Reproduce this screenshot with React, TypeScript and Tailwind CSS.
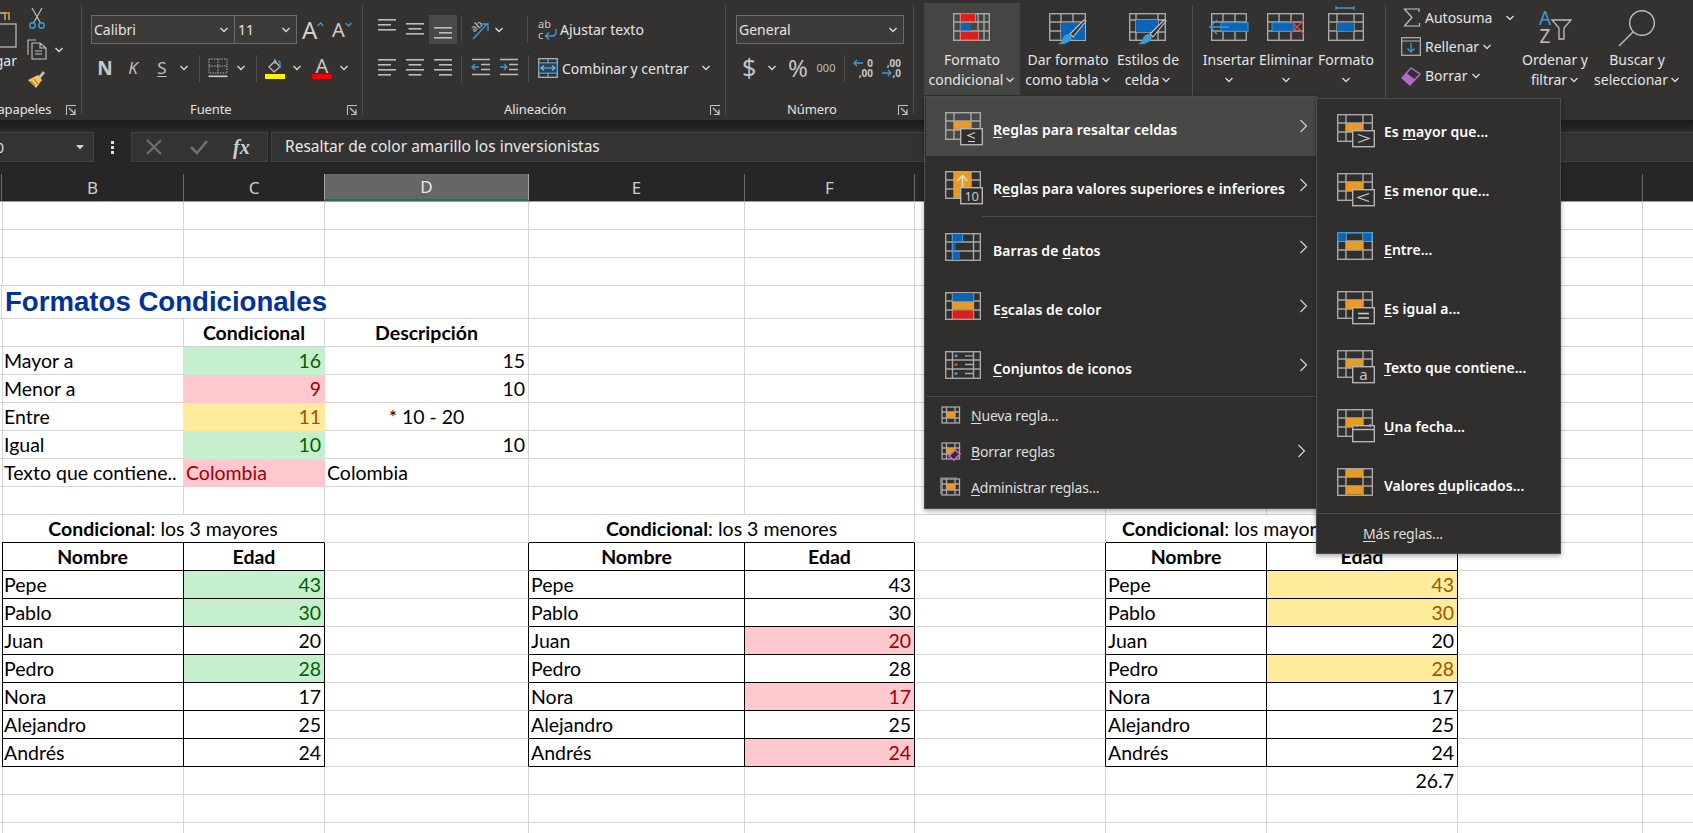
import React from "react";

const COLS = "grid grid-cols-[2px_182px_141px_204px_216px_170px_191px_161px_191px_185px_60px]";
const SEG = "font-['Noto_Sans',sans-serif]";
const CAL = "font-['Lato',sans-serif]";

const GR = "#a9a9a9";
const OR = "#e69b26";
const BL = "#0a64b8";
const LB = "#3d9ad6";
const RD = "#d9201a";
const MBG = "#302f2e";

function Chev({ className = "" }: { className?: string }) {
  return (
    <svg className={`shrink-0 ${className}`} width="10" height="6" viewBox="0 0 10 6">
      <path d="M1.5 1 L5 4.5 L8.5 1" fill="none" stroke="#d8d8d8" strokeWidth="1.4" />
    </svg>
  );
}

function Launcher() {
  return (
    <svg width="11" height="11" viewBox="0 0 11 11" className="shrink-0">
      <path d="M0.5 10 V0.5 H10" fill="none" stroke="#c4c4c4" />
      <path d="M3 3 L9 9 M9 4.5 V9.5 H4" fill="none" stroke="#c4c4c4" strokeWidth="1.2" />
    </svg>
  );
}

function Grid({ w = 35, h = 27, xs = [9, 26], ys = [9, 18], c = GR }: { w?: number; h?: number; xs?: number[]; ys?: number[]; c?: string }) {
  return (
    <g fill="none" stroke={c} strokeWidth="1.4">
      <rect x="0.7" y="0.7" width={w - 0.4} height={h - 0.4} />
      {xs.map((x) => <path key={x} d={`M${x} 0.7 V${h}`} />)}
      {ys.map((y) => <path key={y} d={`M0.7 ${y} H${w}`} />)}
    </g>
  );
}

function SubBox({ children }: { children?: React.ReactNode }) {
  return (
    <g>
      <rect x="15.7" y="16.7" width="21.6" height="16" fill={MBG} stroke="#b5b5b5" strokeWidth="1.4" />
      {children}
    </g>
  );
}

function Brush() {
  return (
    <>
      <path d="M37 8 L24 24 L21 21 L35 7 Z" fill="#333231" stroke="#c9c9c9" strokeWidth="1.1" />
      <path d="M20 21 Q24 24 22 27 Q18 32 9 31 Q13 29 14 25 Q16 21 20 21 Z" fill={LB} />
    </>
  );
}

function MenuIcon({ kind }: { kind: string }) {
  const cell = <rect x="9" y="9" width="17" height="9" fill={OR} />;
  let body: React.ReactNode = null;
  const L = "none";
  if (kind === "le") body = <>{cell}<SubBox><path d="M30 20.5 L23 23.5 L30 26.5 M23 29.5 H30" fill={L} stroke="#cfcfcf" strokeWidth="1.2" /></SubBox></>;
  if (kind === "gt") body = <>{cell}<SubBox><path d="M21 20.5 L32 24.5 L21 28.5" fill={L} stroke="#cfcfcf" strokeWidth="1.2" /></SubBox></>;
  if (kind === "lt") body = <>{cell}<SubBox><path d="M32 20.5 L21 24.5 L32 28.5" fill={L} stroke="#cfcfcf" strokeWidth="1.2" /></SubBox></>;
  if (kind === "eq") body = <>{cell}<SubBox><path d="M21 22.5 H32 M21 27 H32" fill={L} stroke="#cfcfcf" strokeWidth="1.3" /></SubBox></>;
  if (kind === "a") body = <>{cell}<SubBox><text x="26.5" y="30" fontSize="15" fill="#c4c4c4" textAnchor="middle" fontFamily="Noto Sans">a</text></SubBox></>;
  if (kind === "top") body = (
    <>
      <rect x="9" y="1" width="17" height="26" fill={OR} />
      <path d="M17.5 24 V5 M12.5 10 L17.5 4.5 L22.5 10" fill="none" stroke="#ddd" strokeWidth="1.5" />
      <SubBox><text x="26.5" y="30" fontSize="13" fill="#c4c4c4" textAnchor="middle" fontFamily="Noto Sans" letterSpacing="-0.5">10</text></SubBox>
    </>
  );
  if (kind === "date") body = (
    <>
      {cell}
      <rect x="15.7" y="16.7" width="21.6" height="16" fill={MBG} stroke="#b5b5b5" strokeWidth="1.4" />
      <path d="M15.7 20.5 H37 M20 15 V18 M33 15 V18" stroke="#b5b5b5" strokeWidth="1.4" />
    </>
  );
  if (kind === "between") body = (
    <>
      <rect x="1" y="1" width="8" height="8" fill={BL} />
      <rect x="26" y="1" width="8.5" height="8" fill={BL} />
      <rect x="9" y="9" width="17" height="9" fill={OR} />
      <path d="M0.7 9 V0.7 H35 V9" fill="none" stroke={LB} strokeWidth="1.2" />
    </>
  );
  if (kind === "dup") body = (
    <>
      <rect x="9" y="1" width="17" height="8" fill={OR} />
      <rect x="9" y="18" width="17" height="8.5" fill={OR} />
    </>
  );
  if (kind === "bars") body = (
    <>
      <rect x="7.5" y="1" width="10" height="7.5" fill={BL} />
      <rect x="7.5" y="10" width="3.5" height="7.5" fill={BL} />
      <rect x="7.5" y="19" width="7.5" height="7.5" fill={BL} />
      <path d="M7.5 1 V27 M7.5 8.7 H17.5 V1" fill="none" stroke={LB} strokeWidth="1" />
    </>
  );
  if (kind === "scale") body = (
    <>
      <rect x="7.5" y="1" width="21" height="8" fill={BL} />
      <rect x="7.5" y="10" width="21" height="7.5" fill={OR} />
      <rect x="7.5" y="18.5" width="21" height="8" fill={RD} />
      <path d="M7.5 18.5 V27 H28.5 V18.5" fill="none" stroke="#f26a6a" strokeWidth="1" />
    </>
  );
  if (kind === "icons") body = (
    <>
      <circle cx="11" cy="4.8" r="1.6" fill={LB} />
      <circle cx="11" cy="13.5" r="1.6" fill="#e0403c" />
      <circle cx="11" cy="22.5" r="1.6" fill={LB} />
      <path d="M20 4.8 H28 M20 13.5 H28 M20 22.5 H28" stroke="#a9a9a9" strokeWidth="1.3" />
    </>
  );
  const xs = kind === "bars" || kind === "scale" || kind === "icons" ? [7.5, 28.5] : [9, 26];
  return (
    <svg width="39" height="35" viewBox="0 0 39 35" className="mt-[15px] shrink-0">
      <Grid xs={xs} />
      {body}
    </svg>
  );
}

function SmallIcon({ kind }: { kind: string }) {
  return (
    <svg width="21" height="20" viewBox="0 0 21 20" className="shrink-0">
      {kind === "manage" && <path d="M0.7 17 V1 H17" fill="none" stroke="#8d8d8d" strokeWidth="1.2" />}
      <g fill="none" stroke={GR} strokeWidth="1.3">
        <rect x="2" y="2" width="17.5" height="16" />
        <path d="M6.5 2 V18 M15 2 V18 M2 7 H19.5 M2 13 H19.5" />
      </g>
      <rect x="6.5" y="7" width="8.5" height="6" fill={OR} />
      {kind === "erase" && (
        <path d="M9 15 L15 9 L20 13 L14 19 Z" fill="#302f2e" stroke="#c26fd0" strokeWidth="1.6" />
      )}
    </svg>
  );
}

function U({ children }: { children: React.ReactNode }) {
  return <span className="underline underline-offset-2">{children}</span>;
}

function MenuChevron() {
  return (
    <svg width="9" height="14" viewBox="0 0 9 14" className="shrink-0">
      <path d="M1.5 1 L7.5 7 L1.5 13" fill="none" stroke="#d2d2d2" strokeWidth="1.2" />
    </svg>
  );
}

function MainItem({ icon, active, children }: { icon: string; active?: boolean; children: React.ReactNode }) {
  return (
    <div className={`flex h-[59px] pl-[19px] ${active ? "bg-[#484847]" : ""}`}>
      <MenuIcon kind={icon} />
      <div className="mt-[23px] ml-[9px] w-[298px] text-[14px] leading-[20px] font-semibold tracking-[0.05px] whitespace-nowrap text-white">{children}</div>
      <div className="mt-[22px] ml-[8px]"><MenuChevron /></div>
    </div>
  );
}

function LowItem({ icon, chevron, children }: { icon: string; chevron?: boolean; children: React.ReactNode }) {
  return (
    <div className="flex h-[36px] items-center pl-[14px]">
      <SmallIcon kind={icon} />
      <div className="ml-[10px] w-[326px] text-[14px] tracking-[-0.2px] whitespace-nowrap text-[#dedede]">{children}</div>
      {chevron && <div><MenuChevron /></div>}
    </div>
  );
}

function SubItem({ icon, children }: { icon: string; children: React.ReactNode }) {
  return (
    <div className="flex h-[59px] pl-[20px]">
      <MenuIcon kind={icon} />
      <div className="mt-[23px] ml-[8px] text-[14px] leading-[20px] font-semibold tracking-[0.05px] whitespace-nowrap text-white">{children}</div>
    </div>
  );
}

function Menus() {
  return (
    <>
      <div className={`absolute top-[96px] left-[924px] h-[413px] w-[394px] border border-[#4c4c4c] bg-[#302f2e] px-px shadow-[0_2px_5px_rgba(0,0,0,0.35)] ${SEG}`}>
        <MainItem icon="le" active><U>R</U>eglas para resaltar celdas</MainItem>
        <MainItem icon="top">R<U>e</U>glas para valores superiores e inferiores</MainItem>
        <div className="mt-px mb-px ml-[56px] h-px bg-[#4a4a4a]" />
        <MainItem icon="bars">Barras de <U>d</U>atos</MainItem>
        <MainItem icon="scale">E<U>s</U>calas de color</MainItem>
        <MainItem icon="icons"><U>C</U>onjuntos de iconos</MainItem>
        <div className="mt-px h-px bg-[#4a4a4a]" />
        <LowItem icon="new"><U>N</U>ueva regla...</LowItem>
        <LowItem icon="erase" chevron><U>B</U>orrar reglas</LowItem>
        <LowItem icon="manage"><U>A</U>dministrar reglas...</LowItem>
      </div>
      <div className={`absolute top-[98px] left-[1316px] h-[456px] w-[245px] border border-[#4c4c4c] bg-[#302f2e] shadow-[0_2px_5px_rgba(0,0,0,0.35)] ${SEG}`}>
        <SubItem icon="gt">Es <U>m</U>ayor que...</SubItem>
        <SubItem icon="lt"><U>E</U>s menor que...</SubItem>
        <SubItem icon="between"><U>E</U>ntre...</SubItem>
        <SubItem icon="eq"><U>E</U>s igual a...</SubItem>
        <SubItem icon="a"><U>T</U>exto que contiene...</SubItem>
        <SubItem icon="date"><U>U</U>na fecha...</SubItem>
        <SubItem icon="dup">Valores <U>d</U>uplicados...</SubItem>
        <div className="mt-px h-px bg-[#4a4a4a]" />
        <div className="mt-[10px] pl-[46px] text-[14px] leading-[20px] tracking-[-0.2px] text-[#dedede]"><U>M</U>ás reglas...</div>
      </div>
    </>
  );
}

function Group({ className, label, labelPad, launcher, children }: { className: string; label: React.ReactNode; labelPad: string; launcher?: boolean; children: React.ReactNode }) {
  return (
    <div className={`flex h-[120px] shrink-0 ${className}`}>
      <div className="flex min-w-0 flex-1 flex-col pt-[5px]">
        <div className="min-h-0 flex-1">{children}</div>
        <div className={`flex h-[20px] items-center pr-[4px] text-[13px] tracking-[-0.1px] text-[#e2e2e2] ${labelPad}`}>
          {label}
          {launcher && <span className="ml-auto"><Launcher /></span>}
        </div>
      </div>
      <div className="mt-[5px] h-[109px] w-px shrink-0 bg-[#4d4d4d]" />
    </div>
  );
}

function Sep({ className = "" }: { className?: string }) {
  return <div className={`h-[27px] w-px shrink-0 bg-[#4d4d4d] ${className}`} />;
}

function Lines({ ws, ys, align }: { ws: number[]; ys: number[]; align: "l" | "c" | "r" }) {
  return (
    <svg width="28" height="29" viewBox="0 0 28 29" className="block">
      {ws.map((w, i) => {
        const x = align === "l" ? 5 : align === "r" ? 23 - w : 14 - w / 2;
        return <rect key={i} x={x} y={ys[i]} width={w} height="1.6" fill="#bdbdbd" />;
      })}
    </svg>
  );
}

function Ribbon() {
  const small = "whitespace-nowrap text-[14px] tracking-[0px] text-[#e4e4e4]";
  const big = "leading-[20px] whitespace-nowrap text-[14px] tracking-[0px] text-[#e4e4e4]";
  return (
    <div className={`flex h-[120px] bg-[#333231] ${SEG}`}>
      <Group className="w-[82px]" labelPad="pl-0" launcher label={<span className="ml-[-28px]">Portapapeles</span>}>
        <div className="flex">
          <div className="w-[17px] shrink-0 overflow-hidden">
            <svg width="17" height="38" viewBox="0 0 17 38" className="mt-[6px] block">
              <path d="M-4 9 V2 H5 V9" fill="none" stroke="#b5b5b5" strokeWidth="1.4" />
              <path d="M3 2 H9 V9" fill="none" stroke={OR} strokeWidth="1.6" />
              <rect x="-8" y="13" width="24" height="23" fill="none" stroke="#b5b5b5" strokeWidth="1.3" />
            </svg>
            <div className={`mt-[1px] flex w-[17px] justify-end ${small}`}>Pegar</div>
          </div>
          <div className="ml-[10px] flex flex-col">
            <svg width="20" height="22" viewBox="0 0 20 22" className="mt-[3px]">
              <path d="M5 0 L13.5 15 M15 0 L6.5 15" stroke="#c9c9c9" strokeWidth="1.1" fill="none" />
              <circle cx="5.5" cy="17.5" r="2.7" fill="none" stroke={LB} strokeWidth="1.5" />
              <circle cx="14.5" cy="17.5" r="2.7" fill="none" stroke={LB} strokeWidth="1.5" />
            </svg>
            <div className="mt-[9px] flex items-center">
              <svg width="20" height="21" viewBox="0 0 20 21">
                <path d="M1 16 V1 H9 M5 20 V4 H13 L19 9 V20 Z M13 4 V9 H19 M8 12 H15 M8 15 H15" fill="none" stroke="#c2c2c2" strokeWidth="1.1" />
              </svg>
              <Chev className="ml-[7px]" />
            </div>
            <svg width="20" height="20" viewBox="0 0 20 20" className="mt-[9px]">
              <path d="M11 8 L16 2 L18 4 L13 10 Z" fill="#bdbdbd" />
              <path d="M1 11 L11 6 L15 11 L9 19 Z" fill="#f2c35a" />
              <path d="M4 12 L8 17 M7 10 L11 15" stroke="#8a6a1d" strokeWidth="1" />
            </svg>
          </div>
        </div>
      </Group>

      <Group className="w-[281px]" labelPad="pl-[108px]" launcher label="Fuente">
        <div className="mt-[10px] flex h-[29px] items-stretch">
          <div className={`ml-[9px] flex w-[144px] items-center justify-between border border-[#6a6a6a] bg-[#3c3b3a] pr-[5px] pl-[2px] ${small}`}>Calibri<Chev /></div>
          <div className={`flex w-[62px] items-center justify-between border border-l-0 border-[#6a6a6a] bg-[#3c3b3a] pr-[5px] pl-[3px] ${small}`}>11<Chev /></div>
          <div className="ml-[5px] flex w-[20px] items-center text-[24px] text-[#cfcfcf]">
            <span className="leading-none">A</span>
            <svg width="7" height="5" viewBox="0 0 7 5" className="mb-[10px] shrink-0"><path d="M0.5 4 L3.5 1 L6.5 4" fill="none" stroke={LB} strokeWidth="1.3" /></svg>
          </div>
          <div className="ml-[10px] flex w-[18px] items-center text-[20px] text-[#cfcfcf]">
            <span className="leading-none">A</span>
            <svg width="7" height="5" viewBox="0 0 7 5" className="mb-[10px] shrink-0"><path d="M0.5 1 L3.5 4 L6.5 1" fill="none" stroke={LB} strokeWidth="1.3" /></svg>
          </div>
        </div>
        <div className="mt-[13px] flex h-[22px] items-center">
          <span className="ml-[13px] w-[20px] text-center text-[19px] font-bold text-[#c9c9c9]">N</span>
          <span className="ml-[8px] w-[20px] text-center text-[17px] text-[#bdbdbd] italic">K</span>
          <span className="ml-[9px] w-[20px] text-center text-[17px] text-[#bdbdbd] underline underline-offset-2">S</span>
          <Chev className="ml-[7px]" />
          <Sep className="ml-[10px]" />
          <svg width="20" height="20" viewBox="0 0 20 20" className="ml-[8px] shrink-0">
            <path d="M1 1 H19 V15 H1 Z M10 1 V15 M1 8 H19" fill="none" stroke="#a8a8a8" strokeWidth="1" strokeDasharray="1.5 1" />
            <path d="M0.5 18.3 H19.5" stroke="#d0d0d0" strokeWidth="1.6" />
          </svg>
          <Chev className="ml-[8px]" />
          <Sep className="ml-[10px]" />
          <svg width="20" height="21" viewBox="0 0 20 21" className="ml-[8px] shrink-0">
            <path d="M4 9 L10 3 L15 9 L9 14 Z" fill="none" stroke="#c4c4c4" strokeWidth="1.2" />
            <path d="M10 1 V6" stroke="#c4c4c4" />
            <path d="M15 10 V5 Q15 3 13 3" fill="none" stroke={LB} strokeWidth="1.3" />
            <rect x="0" y="16" width="20" height="5" fill="#fff200" />
          </svg>
          <Chev className="ml-[7px]" />
          <div className="ml-[10px] flex h-[21px] w-[20px] shrink-0 flex-col items-center">
            <span className="h-[16px] text-[20px] leading-[16px] text-[#c9c9c9]">A</span>
            <div className="h-[5px] w-[20px] bg-[#f00000]" />
          </div>
          <Chev className="ml-[7px]" />
        </div>
      </Group>

      <Group className="w-[363px]" labelPad="pl-[141px]" launcher label="Alineación">
        <div className="mt-[10px] flex h-[29px] items-center">
          <div className="ml-[10px]"><Lines align="l" ws={[18, 13, 18]} ys={[4, 9, 14]} /></div>
          <Lines align="c" ws={[18, 13, 18]} ys={[8, 13, 18]} />
          <div className="bg-[#4a4948]"><Lines align="r" ws={[18, 13, 18]} ys={[12, 17, 22]} /></div>
          <Sep className="ml-[4px]" />
          <svg width="20" height="22" viewBox="0 0 20 22" className="ml-[8px] shrink-0">
            <text x="1" y="11" fontSize="10" fill="#c9c9c9" transform="rotate(-40 6 8)" fontFamily="Noto Sans">ab</text>
            <path d="M3 20 L17 5 M11 5 H18 V12" fill="none" stroke={LB} strokeWidth="1.4" />
          </svg>
          <Chev className="ml-[4px]" />
          <Sep className="ml-[23px]" />
          <svg width="20" height="22" viewBox="0 0 20 22" className="ml-[10px] shrink-0">
            <text x="0" y="9" fontSize="11" fill="#c9c9c9" fontFamily="Noto Sans">ab</text>
            <text x="0" y="20" fontSize="11" fill="#c9c9c9" fontFamily="Noto Sans">c</text>
            <path d="M18 10 V13 Q18 17 14 17 H8 M11 13.5 L7.5 17 L11 20.5" fill="none" stroke={LB} strokeWidth="1.4" />
          </svg>
          <span className={`ml-[2px] ${small}`}>Ajustar texto</span>
        </div>
        <div className="mt-[13px] flex h-[22px] items-center">
          <div className="ml-[10px]"><Lines align="l" ws={[18, 13, 18, 13]} ys={[5, 10, 15, 20]} /></div>
          <Lines align="c" ws={[18, 13, 18, 13]} ys={[5, 10, 15, 20]} />
          <Lines align="r" ws={[18, 13, 18, 13]} ys={[5, 10, 15, 20]} />
          <Sep className="ml-[4px]" />
          <svg width="20" height="20" viewBox="0 0 20 20" className="ml-[9px] shrink-0">
            <path d="M1 1.5 H19 M10 6.5 H19 M10 11.5 H19 M1 16.5 H19" stroke="#bdbdbd" strokeWidth="1.5" />
            <path d="M8 9 H1 M4 6 L1 9 L4 12" fill="none" stroke={LB} strokeWidth="1.4" />
          </svg>
          <svg width="20" height="20" viewBox="0 0 20 20" className="ml-[8px] shrink-0">
            <path d="M1 1.5 H19 M10 6.5 H19 M10 11.5 H19 M1 16.5 H19" stroke="#bdbdbd" strokeWidth="1.5" />
            <path d="M1 9 H8 M5 6 L8 9 L5 12" fill="none" stroke={LB} strokeWidth="1.4" />
          </svg>
          <Sep className="ml-[9px]" />
          <svg width="20" height="20" viewBox="0 0 20 20" className="ml-[9px] shrink-0">
            <rect x="0.7" y="0.7" width="18.6" height="18.6" fill="none" stroke="#b5b5b5" strokeWidth="1.3" />
            <path d="M0.7 5 H19 M0.7 15 H19 M10 1 V5 M10 15 V19" stroke="#b5b5b5" />
            <rect x="1" y="5" width="18" height="10" fill="#25415c" stroke={LB} />
            <path d="M3 10 H17 M6 7.5 L3 10 L6 12.5 M14 7.5 L17 10 L14 12.5" fill="none" stroke="#7cc0ee" strokeWidth="1.1" />
          </svg>
          <span className={`ml-[4px] w-[128px] ${small}`}>Combinar y centrar</span>
          <Chev className="ml-[11px]" />
        </div>
      </Group>

      <Group className="w-[188px]" labelPad="pl-[61px]" launcher label="Número">
        <div className={`mt-[10px] ml-[10px] flex h-[29px] w-[168px] items-center justify-between border border-[#6a6a6a] bg-[#3c3b3a] pr-[5px] pl-[2px] ${small}`}>General<Chev /></div>
        <div className="mt-[13px] flex h-[22px] items-center">
          <span className="ml-[16px] w-[14px] text-center text-[25px] text-[#c4c4c4]">$</span>
          <Chev className="ml-[11px]" />
          <span className="ml-[8px] w-[26px] text-center text-[24px] text-[#c4c4c4]">%</span>
          <span className="ml-[5px] w-[20px] text-center text-[11px] text-[#bdbdbd]">000</span>
          <Sep className="ml-[8px]" />
          <div className="ml-[8px] w-[20px] text-right text-[10px] leading-[10px] font-bold text-[#c4c4c4]">
            <div className="flex items-center justify-between">
              <svg width="11" height="10" viewBox="0 0 11 10" className="shrink-0"><path d="M10 5 H1 M4 2 L1 5 L4 8" fill="none" stroke={LB} strokeWidth="1.4" /></svg>
              <span>0</span>
            </div>
            <div>,00</div>
          </div>
          <div className="ml-[8px] w-[20px] text-right text-[10px] leading-[10px] font-bold text-[#c4c4c4]">
            <div>,00</div>
            <div className="flex items-center justify-between">
              <svg width="11" height="10" viewBox="0 0 11 10" className="shrink-0"><path d="M1 5 H10 M7 2 L10 5 L7 8" fill="none" stroke={LB} strokeWidth="1.4" /></svg>
              <span>,0</span>
            </div>
          </div>
        </div>
      </Group>

      <Group className="w-[279px]" labelPad="pl-0" label="">
        <div className="flex">
          <div className="-mt-[2px] ml-[10px] flex h-[92px] w-[96px] shrink-0 flex-col items-center bg-[#454544] pt-[10px]">
            <svg width="38" height="28" viewBox="0 0 38 28" className="shrink-0">
              <Grid w={36} h={27} xs={[7.5, 25, 31]} ys={[9, 18]} />
              <rect x="7.5" y="0.7" width="15" height="8" fill={RD} stroke="#f26a6a" />
              <rect x="7.5" y="10" width="10" height="7.5" fill={BL} />
              <rect x="7.5" y="18.5" width="18" height="8.5" fill={RD} stroke="#f26a6a" />
            </svg>
            <div className={`mt-[9px] ${big}`}>Formato</div>
            <div className={`flex items-center ${big}`}>condicional<Chev className="ml-[2px]" /></div>
          </div>
          <div className="-mt-[2px] flex h-[92px] w-[96px] shrink-0 flex-col items-center pt-[10px]">
            <svg width="38" height="34" viewBox="0 0 38 34" className="mb-[-6px] shrink-0">
              <Grid w={36} h={27} xs={[12, 24]} ys={[9, 18]} />
              <rect x="12" y="9.7" width="24" height="17" fill={BL} />
              <Brush />
            </svg>
            <div className={`mt-[9px] ${big}`}>Dar formato</div>
            <div className={`flex items-center ${big}`}>como tabla<Chev className="ml-[2px]" /></div>
          </div>
          <div className="-mt-[2px] flex h-[92px] w-[64px] shrink-0 flex-col items-center pt-[10px]">
            <svg width="38" height="34" viewBox="0 0 38 34" className="mb-[-6px] shrink-0">
              <Grid w={36} h={27} xs={[7, 29]} ys={[7, 19]} />
              <rect x="7" y="7" width="22" height="12" fill={BL} />
              <Brush />
            </svg>
            <div className={`mt-[9px] ${big}`}>Estilos de</div>
            <div className={`flex items-center ${big}`}>celda<Chev className="ml-[2px]" /></div>
          </div>
        </div>
      </Group>

      <Group className="w-[193px]" labelPad="pl-0" label="">
        <div className="ml-[6px] flex">
          <div className="-mt-[2px] flex h-[92px] w-[60px] shrink-0 flex-col items-center pt-[10px]">
            <svg width="40" height="28" viewBox="0 0 40 28" className="shrink-0">
              <g transform="translate(2 0)"><Grid w={35} h={27} xs={[12, 24]} ys={[9, 18]} /></g>
              <rect x="12" y="9.7" width="27" height="8.5" fill={BL} stroke={LB} />
              <path d="M20 14 H2 M8 7 L1 14 L8 21" fill="none" stroke={LB} strokeWidth="1.5" />
            </svg>
            <div className={`mt-[9px] ${big}`}>Insertar</div>
            <Chev className="mt-[7px]" />
          </div>
          <div className="-mt-[2px] flex h-[92px] w-[54px] shrink-0 flex-col items-center pt-[10px]">
            <svg width="38" height="28" viewBox="0 0 38 28" className="shrink-0">
              <Grid w={36} h={27} xs={[12, 24]} ys={[9, 18]} />
              <rect x="5" y="9.7" width="22" height="8.5" fill={BL} stroke={LB} />
              <path d="M23 7 L37 21 M37 7 L23 21" stroke="#e8453f" strokeWidth="1.4" />
            </svg>
            <div className={`mt-[9px] ${big}`}>Eliminar</div>
            <Chev className="mt-[7px]" />
          </div>
          <div className="-mt-[8px] flex h-[98px] w-[66px] shrink-0 flex-col items-center pt-[8px]">
            <svg width="38" height="36" viewBox="0 0 38 36" className="shrink-0">
              <path d="M9 1 V5 M9 3 H27 M27 1 V5" stroke={LB} strokeWidth="1.3" />
              <g transform="translate(1 8)"><Grid w={35} h={27} xs={[9, 26]} ys={[9, 18]} /></g>
              <rect x="10" y="17.7" width="17" height="8.5" fill={BL} />
            </svg>
            <div className={`mt-[9px] ${big}`}>Formato</div>
            <Chev className="mt-[7px]" />
          </div>
        </div>
      </Group>

      <div className="flex h-[120px] flex-1 pt-[3px]">
        <div className="w-[134px] shrink-0">
          <div className="flex h-[29px] items-center">
            <svg width="18" height="19" viewBox="0 0 18 19" className="ml-[17px] shrink-0">
              <path d="M16 4 V1 H1.5 L9 9.5 L1.5 18 H16.5 V15" fill="none" stroke="#c4c4c4" strokeWidth="1.2" />
            </svg>
            <span className={`ml-[4px] ${small}`}>Autosuma</span>
            <Chev className="ml-[13px]" />
          </div>
          <div className="flex h-[29px] items-center">
            <svg width="20" height="19" viewBox="0 0 20 19" className="ml-[15px] shrink-0">
              <rect x="0.7" y="0.7" width="18.6" height="17.6" fill="none" stroke="#b5b5b5" strokeWidth="1.2" />
              <path d="M0.7 4 H19" stroke="#b5b5b5" />
              <path d="M10 6 V15 M6.5 11.5 L10 15 L13.5 11.5" fill="none" stroke={LB} strokeWidth="1.3" />
            </svg>
            <span className={`ml-[4px] ${small}`}>Rellenar</span>
            <Chev className="ml-[3px]" />
          </div>
          <div className="flex h-[29px] items-center">
            <svg width="20" height="20" viewBox="0 0 20 20" className="ml-[15px] shrink-0">
              <path d="M1 12 L10 2 L19 8 L9 19 Z" fill="#333231" stroke="#b46ac4" strokeWidth="1.4" />
              <path d="M1 12 L5.5 7 L14 13.5 L9 19 Z" fill="#b46ac4" />
            </svg>
            <span className={`ml-[4px] ${small}`}>Borrar</span>
            <Chev className="ml-[3px]" />
          </div>
        </div>
        <div className="flex h-[92px] w-[70px] shrink-0 flex-col items-center pt-[7px]">
          <svg width="36" height="34" viewBox="0 0 36 34" className="shrink-0">
            <text x="8" y="15" fontSize="19" fill={LB} textAnchor="middle" fontFamily="Noto Sans">A</text>
            <text x="8" y="33" fontSize="19" fill="#bdbdbd" textAnchor="middle" fontFamily="Noto Sans">Z</text>
            <path d="M15 10 H34 L27 18 V29 H22 V18 Z" fill="none" stroke="#bdbdbd" strokeWidth="1.3" />
          </svg>
          <div className={`mt-[6px] ${big}`}>Ordenar y</div>
          <div className={`flex items-center ${big}`}>filtrar<Chev className="ml-[2px]" /></div>
        </div>
        <div className="flex h-[92px] w-[94px] shrink-0 flex-col items-center pt-[6px]">
          <svg width="38" height="38" viewBox="0 0 38 38" className="shrink-0">
            <circle cx="24" cy="14" r="12.3" fill="none" stroke="#bdbdbd" strokeWidth="1.4" />
            <path d="M15 23 L1 37" stroke="#bdbdbd" strokeWidth="1.4" />
          </svg>
          <div className={`mt-[3px] ${big}`}>Buscar y</div>
          <div className={`flex items-center ${big}`}>seleccionar<Chev className="ml-[2px]" /></div>
        </div>
      </div>
    </div>
  );
}

function FormulaBar() {
  return (
    <div className={`flex h-[42px] bg-[#262626] ${SEG}`}>
      <div className="flex h-[30px] w-[94px] shrink-0 items-center justify-between border border-l-0 border-[#404040] bg-[#333333] pr-[9px] text-[14px] text-[#e4e4e4]">
        <span className="-ml-[4px]">0</span>
        <svg width="8" height="5" viewBox="0 0 8 5"><path d="M0 0 H8 L4 4.5 Z" fill="#d0d0d0" /></svg>
      </div>
      <div className="flex h-[30px] w-[37px] shrink-0 flex-col items-center justify-center gap-[2px]">
        <i className="h-[3px] w-[3px] bg-[#e0e0e0]" /><i className="h-[3px] w-[3px] bg-[#e0e0e0]" /><i className="h-[3px] w-[3px] bg-[#e0e0e0]" />
      </div>
      <div className="flex h-[30px] w-[137px] shrink-0 items-center border border-[#404040] bg-[#333333]">
        <svg width="16" height="16" viewBox="0 0 16 16" className="ml-[14px]"><path d="M1 1 L15 15 M15 1 L1 15" stroke="#6e6e6e" strokeWidth="2.2" /></svg>
        <svg width="18" height="16" viewBox="0 0 18 16" className="ml-[28px]"><path d="M1 8 L7 14 L17 2" fill="none" stroke="#6e6e6e" strokeWidth="2.6" /></svg>
        <span className="ml-[25px] font-['Liberation_Serif',serif] text-[20px] font-bold text-[#cfcfcf] italic">fx</span>
      </div>
      <div className="ml-[3px] flex h-[30px] flex-1 items-center border border-r-0 border-[#404040] bg-[#333333] pl-[13px] text-[15.5px] text-[#e8e8e8]">Resaltar de color amarillo los inversionistas</div>
    </div>
  );
}

function HeaderRow() {
  const labels = ["", "B", "C", "D", "E", "F", "G", "H", "I", "J", ""];
  return (
    <div className={`${COLS} h-[28px] border-b border-[#9e9e9e] bg-[#262626] text-[17px] leading-[20px] text-[#cfcfcf] ${SEG}`}>
      {labels.map((l, i) => (
        <div
          key={i}
          className={
            i === 3
              ? "-ml-px flex items-center justify-center border-x border-b-2 border-[#a5a5a5] border-b-[#217346] bg-[#666666] text-[#e8e8e8]"
              : "flex items-center justify-center border-r border-[#6a6a6a]"
          }
        >
          {l}
        </div>
      ))}
    </div>
  );
}

type Cell = {
  t?: React.ReactNode;
  span?: number;
  a?: "r" | "c" | "l";
  b?: boolean;
  fill?: "g" | "r" | "y";
};

const fillCls = {
  g: "bg-[#c6efce] text-[#006100]",
  r: "bg-[#ffc7ce] text-[#9c0006]",
  y: "bg-[#ffeb9c] text-[#9c5700]",
};
const fillB = { g: "border-b-[#c6efce]", r: "border-b-[#ffc7ce]", y: "border-b-[#ffeb9c]" };
const fillR = { g: "border-r-[#c6efce]", r: "border-r-[#ffc7ce]", y: "border-r-[#ffeb9c]" };

const names = ["Pepe", "Pablo", "Juan", "Pedro", "Nora", "Alejandro", "Andrés"];
const ages = [43, 30, 20, 28, 17, 25, 24];
const T1 = [0, 1, 3];
const T2 = [2, 4, 6];
const T3 = [0, 1, 3];

function rowCells(r: number): Record<number, Cell> {
  switch (r) {
    case 4: return { 2: { t: "Condicional", a: "c", b: true }, 3: { t: "Descripción", a: "c", b: true } };
    case 5: return { 1: { t: "Mayor a" }, 2: { t: 16, a: "r", fill: "g" }, 3: { t: 15, a: "r" } };
    case 6: return { 1: { t: "Menor a" }, 2: { t: 9, a: "r", fill: "r" }, 3: { t: 10, a: "r" } };
    case 7: return { 1: { t: "Entre" }, 2: { t: 11, a: "r", fill: "y" }, 3: { t: "* 10 - 20", a: "c" } };
    case 8: return { 1: { t: "Igual" }, 2: { t: 10, a: "r", fill: "g" }, 3: { t: 10, a: "r" } };
    case 9: return { 1: { t: "Texto que contiene.." }, 2: { t: "Colombia", fill: "r" }, 3: { t: "Colombia" } };
    case 11: {
      const h = (s: string) => <span><b className="font-bold">Condicional</b>: {s}</span>;
      return {
        1: { t: h("los 3 mayores"), span: 2, a: "c" },
        4: { t: h("los 3 menores"), span: 2, a: "c" },
        7: { t: h("los mayores al promedio"), span: 2, a: "c" },
      };
    }
    case 12: return {
      1: { t: "Nombre", a: "c", b: true }, 2: { t: "Edad", a: "c", b: true },
      4: { t: "Nombre", a: "c", b: true }, 5: { t: "Edad", a: "c", b: true },
      7: { t: "Nombre", a: "c", b: true }, 8: { t: "Edad", a: "c", b: true },
    };
    case 20: return { 8: { t: 26.7, a: "r" } };
    default:
      if (r >= 13 && r <= 19) {
        const i = r - 13;
        return {
          1: { t: names[i] }, 2: { t: ages[i], a: "r", fill: T1.includes(i) ? "g" : undefined },
          4: { t: names[i] }, 5: { t: ages[i], a: "r", fill: T2.includes(i) ? "r" : undefined },
          7: { t: names[i] }, 8: { t: ages[i], a: "r", fill: T3.includes(i) ? "y" : undefined },
        };
      }
      return {};
  }
}

const inTable = (c: number) => [1, 2, 4, 5, 7, 8].includes(c);

function SheetRow({ r }: { r: number }) {
  const cells = rowCells(r);
  const out: React.ReactNode[] = [];
  if (r === 3) {
    out.push(<div key="a" className="border-r border-b border-r-[#d4d4d4] border-b-[#d4d4d4]" />);
    out.push(
      <div key="t" className="col-span-3 flex items-center border-r border-b border-r-[#d4d4d4] border-b-[#d4d4d4] pl-[3px] font-['Liberation_Sans',sans-serif] text-[27.6px] leading-[32px] font-bold whitespace-nowrap text-[#003399]">
        Formatos Condicionales
      </div>,
    );
    for (let c = 4; c < 11; c++) out.push(<div key={c} className="border-r border-b border-r-[#d4d4d4] border-b-[#d4d4d4]" />);
    return <div className={`${COLS} h-[33px] grid-rows-[33px]`}>{out}</div>;
  }
  for (let c = 0; c < 11; c++) {
    const cell = cells[c] ?? {};
    const span = cell.span ?? 1;
    const last = c + span - 1;
    const inRowsR = r >= 12 && r <= 19;
    const blackR = inRowsR && (inTable(last) || inTable(last + 1));
    const blackB = r >= 11 && r <= 19 && inTable(c);
    const next = cells[last + 1];
    let rc = "border-r-[#d4d4d4]";
    let bc = "border-b-[#d4d4d4]";
    if (r >= 5 && r <= 9 && cell.fill) { rc = fillR[cell.fill]; bc = fillB[cell.fill]; }
    if (r >= 5 && r <= 9 && next?.fill) rc = fillR[next.fill];
    if (blackR) rc = "border-r-black";
    if (blackB) bc = "border-b-black";
    const align = cell.a === "r" ? "justify-end pr-[3px]" : cell.a === "c" ? "justify-center" : "pl-[2px]";
    out.push(
      <div
        key={c}
        className={`flex items-center border-r border-b whitespace-nowrap ${rc} ${bc} ${align} ${span === 2 ? "col-span-2" : ""} ${cell.fill ? fillCls[cell.fill] : "text-black"} ${cell.b ? "font-bold" : ""}`}
      >
        {cell.t}
      </div>,
    );
    c += span - 1;
  }
  return <div className={`${COLS} h-[28px] grid-rows-[28px]`}>{out}</div>;
}

function Sheet() {
  return (
    <div className={`bg-white text-[19.5px] leading-[24px] ${CAL}`}>
      {Array.from({ length: 23 }, (_, r) => <SheetRow key={r} r={r} />)}
    </div>
  );
}

export default function App() {
  return (
    <div className="relative h-[833px] w-[1693px] overflow-hidden bg-white">
      <Ribbon />
      <div className="h-[12px] bg-gradient-to-b from-[#1b1b1b] to-[#2a2a2a]" />
      <FormulaBar />
      <HeaderRow />
      <Sheet />
      <Menus />
    </div>
  );
}
